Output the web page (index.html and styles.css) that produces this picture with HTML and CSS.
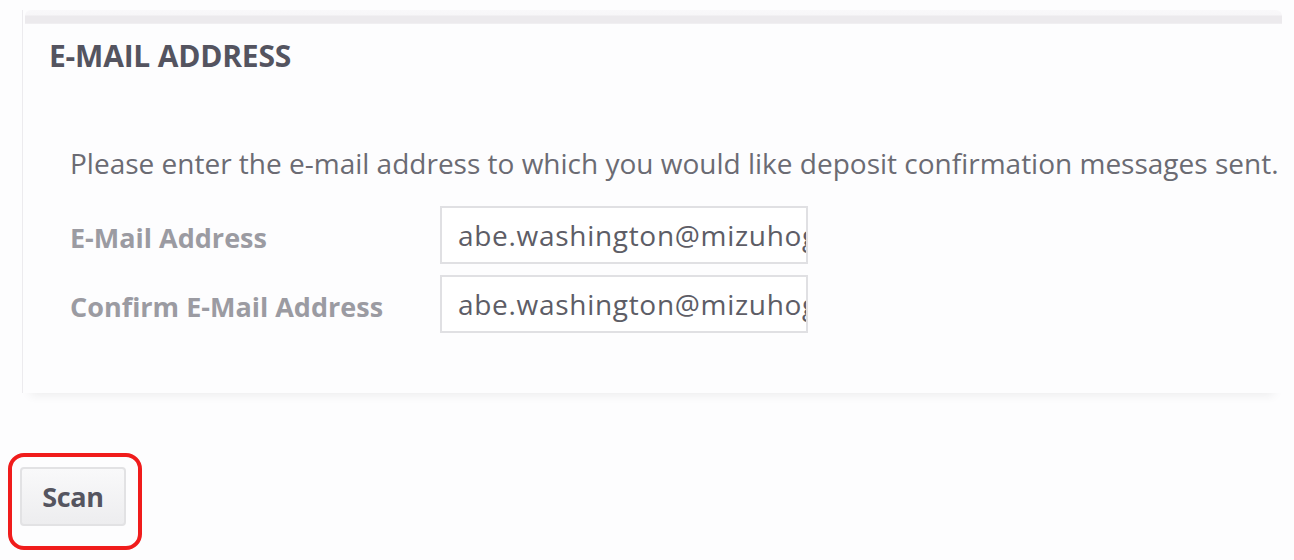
FILE: index.html
```html
<!DOCTYPE html>
<html>
<head>
<meta charset="utf-8">
<link rel="stylesheet" href="styles.css">
</head>
<body>
<div class="page">
  <section class="panel">
    <div class="panel-cap"></div>
    <h2 class="panel-title">E-MAIL ADDRESS</h2>
    <div class="panel-body">
      <p class="intro">Please enter the e-mail address to which you would like deposit confirmation messages sent.</p>
      <div class="form-row">
        <label class="field-label">E-Mail Address</label>
        <div class="field-input">abe.washington@mizuhog</div>
      </div>
      <div class="form-row">
        <label class="field-label">Confirm E-Mail Address</label>
        <div class="field-input">abe.washington@mizuhog</div>
      </div>
    </div>
  </section>
  <div class="actions">
    <div class="highlight">
      <button class="btn">Scan</button>
    </div>
  </div>
</div>
</body>
</html>
```
FILE: styles.css
```css
html, body {
  margin: 0;
  padding: 0;
  background: #fdfdfe;
}
body {
  font-family: "Open Sans", "Noto Sans", sans-serif;
  width: 1294px;
  height: 560px;
  overflow: hidden;
}
.page {
  padding: 10px 0 0 22px;
}
.panel {
  width: 1260px;
  height: 383px;
  background: #fdfdfe;
  border-left: 1px solid #ecebee;
  box-shadow: 0 10px 10px -8px rgba(0, 0, 0, 0.07);
  box-sizing: border-box;
}
.panel-cap {
  height: 14px;
  margin-left: 2px;
  border-radius: 6px 6px 0 0;
  background: linear-gradient(#f9f8fa 0, #f7f6f8 5px, #eceaed 6px, #eceaed 13px, #f4f3f5 14px);
}
.panel-title {
  margin: 0;
  padding: 14px 0 0 26px;
  height: 50px;
  box-sizing: border-box;
  font-size: 30px;
  font-weight: 700;
  color: #545460;
  letter-spacing: -0.2px;
  line-height: 36px;
}
.panel-body {
  padding: 0 0 0 47px;
}
.intro {
  margin: 0;
  padding-top: 72px;
  font-size: 28px;
  line-height: 34px;
  color: #6b6b73;
  white-space: nowrap;
  letter-spacing: 0;
}
.form-row {
  display: flex;
  align-items: center;
  margin-top: 11px;
}
.intro + .form-row {
  margin-top: 26px;
}
.field-label {
  width: 370px;
  font-size: 27px;
  font-weight: 700;
  color: #9b9ba2;
  letter-spacing: 0;
  padding-top: 4px;
}
.field-input {
  width: 368px;
  height: 58px;
  box-sizing: border-box;
  border: 2px solid #e0e0e3;
  background: #fff;
  padding: 0 0 0 16px;
  font-size: 28px;
  line-height: 54px;
  color: #5d5d66;
  white-space: nowrap;
  overflow: hidden;
  letter-spacing: 0.7px;
}
.actions {
  padding-top: 60px;
  margin-left: -14px;
}
.highlight {
  display: inline-block;
  padding: 10px 12px 20px 8px;
  border: 4px solid #f01c1c;
  border-radius: 16px;
}
.btn {
  display: block;
  width: 106px;
  height: 59px;
  border: 2px solid #e2e2e4;
  border-radius: 4px;
  background: linear-gradient(#f9f9fa, #ededef);
  font-family: "Open Sans", "Noto Sans", sans-serif;
  font-size: 27px;
  font-weight: 700;
  color: #555560;
  letter-spacing: -0.3px;
  padding: 0;
}
```
